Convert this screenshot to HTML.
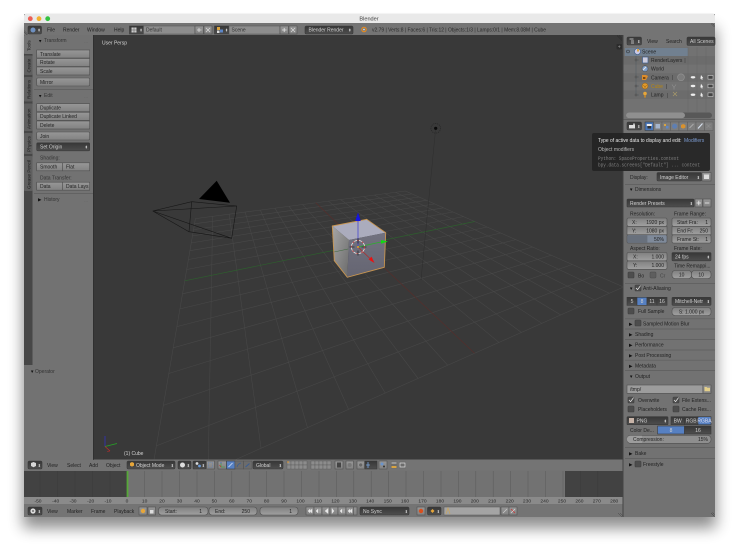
<!DOCTYPE html>
<html><head><meta charset="utf-8"><title>Blender</title>
<style>
html,body{margin:0;padding:0;background:#fff;width:739px;height:551px;overflow:hidden}
svg{display:block;filter:blur(.38px)}
text{font-family:"Liberation Sans",sans-serif;font-size:5px;fill:#222;white-space:pre}
.w{fill:#d0d0d0}.m{font-family:"Liberation Mono",monospace;fill:#808080;font-size:5px}
.e{text-anchor:end}.c{text-anchor:middle}
.ar{font-size:4.4px;fill:#111}
.u{font-size:4px;fill:#d0d0d0;text-anchor:end}
.b{fill:url(#bt);stroke:#505050;stroke-width:.6}
.d{fill:url(#dk);stroke:#3a3a3a;stroke-width:.6}
.f{fill:url(#fd);stroke:#505050;stroke-width:.6}
.a{fill:#5680c2;stroke:#3a3a3a;stroke-width:.6}
.k{fill:#4d4d4d;stroke:#404040;stroke-width:.6}
.s{stroke:#5e5e5e;stroke-width:.7}
.r text{font-size:4.9px;fill:#2a2a2a}
.h{stroke:#3c3c3c;stroke-width:.5;fill:none}
</style></head><body>
<svg width="739" height="551" viewBox="0 0 739 551" xmlns="http://www.w3.org/2000/svg">
<defs>
<linearGradient id="bt" x1="0" y1="0" x2="0" y2="1"><stop offset="0" stop-color="#979797"/><stop offset="1" stop-color="#828282"/></linearGradient>
<linearGradient id="dk" x1="0" y1="0" x2="0" y2="1"><stop offset="0" stop-color="#373737"/><stop offset="1" stop-color="#4e4e4e"/></linearGradient>
<linearGradient id="fd" x1="0" y1="0" x2="0" y2="1"><stop offset="0" stop-color="#808080"/><stop offset="1" stop-color="#a0a0a0"/></linearGradient>
<linearGradient id="lf" x1="0" y1="0" x2="1" y2="1"><stop offset="0" stop-color="#a6a6a6"/><stop offset="1" stop-color="#6a6a6a"/></linearGradient>
<linearGradient id="rf" x1="0" y1="0" x2="0" y2="1"><stop offset="0" stop-color="#72727f"/><stop offset="1" stop-color="#656572"/></linearGradient>
<filter id="sh" x="-10%" y="-10%" width="120%" height="125%"><feGaussianBlur stdDeviation="7.5"/></filter>
<clipPath id="vw"><rect x="93" y="35" width="529.5" height="424.5"/></clipPath>
</defs>

<!-- shadow + window -->
<rect x="23" y="28" width="693" height="500" fill="#000" opacity=".45" filter="url(#sh)"/>
<rect x="24" y="14" width="691" height="503" fill="#727272"/>
<path d="M24 23V16a2.5 2.5 0 0 1 2.5-2.5H712.5a2.5 2.5 0 0 1 2.5 2.5V23Z" fill="#e9e9e9"/>
<circle cx="30.3" cy="18.7" r="2.4" fill="#ec5f56"/><circle cx="39" cy="18.7" r="2.4" fill="#f3b12f"/><circle cx="47.7" cy="18.7" r="2.4" fill="#33c240"/>
<text x="369" y="20.6" class="c" style="font-size:5.6px;fill:#444">Blender</text>

<!-- top header -->
<rect x="24" y="23" width="691" height="12" fill="#747474"/>
<path d="M711 23.5l3.5 3.5M712.5 23.5l2 2M24 32l3 3M24 30.5l4 4" class="h"/>
<rect x="28" y="26" width="13.5" height="8" rx="1.5" class="d"/><circle cx="33" cy="30" r="2.5" fill="#6e90c0"/><text x="40.7" y="31.6" class="u">⬍</text>
<text x="47" y="31.6">File</text><text x="63" y="31.6">Render</text><text x="87" y="31.6">Window</text><text x="114" y="31.6">Help</text>
<rect x="129.5" y="26" width="14" height="8" class="d"/><rect x="131.5" y="27.5" width="5" height="5" fill="#ccc"/><path d="M134 27.5v5M131.5 30h5" stroke="#555" stroke-width=".5"/><text x="142.7" y="31.6" class="u">⬍</text>
<rect x="143.5" y="26" width="51.5" height="8" fill="#8d8d8d" stroke="#555" stroke-width=".5"/><text x="146" y="31.6" style="fill:#333">Default</text>
<rect x="195" y="26" width="8.5" height="8" class="b"/><path d="M197 30h4.5M199 28v4" stroke="#ddd" stroke-width=".8"/>
<rect x="204" y="26" width="8" height="8" class="b"/><path d="M206 28l4 4M210 28l-4 4" stroke="#ddd" stroke-width=".7"/>
<rect x="214.5" y="26" width="14.5" height="8" class="d"/><rect x="217" y="27" width="3" height="3" fill="#d9a441"/><rect x="220" y="29.5" width="3" height="3" fill="#5d86c6"/><rect x="217" y="30.5" width="2.5" height="2.5" fill="#ddd"/><text x="228.2" y="31.6" class="u">⬍</text>
<rect x="229" y="26" width="51" height="8" fill="#8d8d8d" stroke="#555" stroke-width=".5"/><text x="231.5" y="31.6" style="fill:#333">Scene</text>
<rect x="280" y="26" width="8.5" height="8" class="b"/><path d="M282 30h4.5M284.2 28v4" stroke="#e6e6e6" stroke-width=".8"/>
<rect x="289" y="26" width="8" height="8" class="b"/><path d="M291 28l4 4M295 28l-4 4" stroke="#ddd" stroke-width=".7"/>
<rect x="305" y="26" width="48" height="8" rx="1.5" class="d"/><text x="308.5" y="31.6" class="w">Blender Render</text><text x="351.5" y="31.6" class="u">⬍</text>
<circle cx="364" cy="29.5" r="2.2" fill="none" stroke="#e58a1f" stroke-width="1.2"/><circle cx="364" cy="29.5" r=".9" fill="#cfe0f0"/>
<text x="372" y="31.6" textLength="174" lengthAdjust="spacingAndGlyphs" style="fill:#2a2a2a">v2.79 | Verts:8 | Faces:6 | Tris:12 | Objects:1/3 | Lamps:0/1 | Mem:8.08M | Cube</text>

<!-- tool shelf -->
<rect x="24" y="35" width="69" height="425" fill="#727272"/>
<rect x="24" y="35" width="8.5" height="330" fill="#474747"/>
<rect x="24" y="35" width="9" height="19" rx="1" fill="#737373"/>
<g fill="#5f5f5f"><rect x="24" y="55.5" width="8.5" height="19.5" rx="1"/><rect x="24" y="77" width="8.5" height="24.5" rx="1"/><rect x="24" y="103.5" width="8.5" height="27.5" rx="1"/><rect x="24" y="133" width="8.5" height="21" rx="1"/><rect x="24" y="156" width="8.5" height="35" rx="1"/></g>
<g>
<text transform="translate(30.3 51) rotate(-90)" style="font-size:4.6px">Tools</text>
<text transform="translate(30.3 72.5) rotate(-90)" style="font-size:4.6px;fill:#1c1c1c">Create</text>
<text transform="translate(30.3 99) rotate(-90)" style="font-size:4.6px;fill:#1c1c1c">Relations</text>
<text transform="translate(30.3 129) rotate(-90)" style="font-size:4.6px;fill:#1c1c1c">Animation</text>
<text transform="translate(30.3 152) rotate(-90)" style="font-size:4.6px;fill:#1c1c1c">Physics</text>
<text transform="translate(30.3 189) rotate(-90)" style="font-size:4.6px;fill:#1c1c1c">Grease Pencil</text>
</g>
<text x="38" y="42.3" class="ar">▼</text><text x="44" y="42.2" style="fill:#333">Transform</text>
<rect x="36.7" y="50" width="53" height="8" class="b"/><text x="40" y="55.8">Translate</text>
<rect x="36.7" y="58.5" width="53" height="8" class="b"/><text x="40" y="64.2">Rotate</text>
<rect x="36.7" y="67" width="53" height="8" class="b"/><text x="40" y="72.8">Scale</text>
<rect x="36.7" y="78" width="53" height="8" rx="1.2" class="b"/><text x="40" y="83.8">Mirror</text>
<path d="M34 89.5h59" class="s"/>
<text x="38" y="97.3" class="ar">▼</text><text x="44" y="97.2" style="fill:#333">Edit</text>
<rect x="36.7" y="103.7" width="53" height="8" class="b"/><text x="40" y="109.6">Duplicate</text>
<rect x="36.7" y="112.3" width="53" height="8" class="b"/><text x="40" y="118.2">Duplicate Linked</text>
<rect x="36.7" y="121" width="53" height="8" class="b"/><text x="40" y="126.8">Delete</text>
<rect x="36.7" y="132" width="53" height="8" rx="1.2" class="b"/><text x="40" y="137.8">Join</text>
<rect x="36.7" y="142.8" width="53" height="8" rx="1.2" class="d"/><text x="40" y="148.6" class="w">Set Origin</text><text x="88" y="148.6" class="u">⬍</text>
<text x="40" y="159.6" style="fill:#333">Shading:</text>
<rect x="36.7" y="162.8" width="26" height="8" class="b"/><rect x="62.7" y="162.8" width="27" height="8" class="b"/><text x="40" y="168.6">Smooth</text><text x="66" y="168.6">Flat</text>
<text x="40" y="179.6" style="fill:#333">Data Transfer:</text>
<rect x="36.7" y="182.2" width="26" height="8" class="b"/><rect x="62.7" y="182.2" width="27" height="8" class="b"/><text x="40" y="188">Data</text><text x="66" y="188">Data Lays</text>
<path d="M34 193.5h59" class="s"/>
<text x="38" y="201.2" class="ar">▶</text><text x="44" y="201" style="fill:#333">History</text>
<text x="30" y="373" class="ar">▼</text><text x="35" y="372.8" style="fill:#333">Operator</text>
<text x="84" y="44" style="fill:#5c5c5c;font-size:4px">···</text><text x="84" y="99" style="fill:#5c5c5c;font-size:4px">···</text><text x="84" y="203" style="fill:#5c5c5c;font-size:4px">···</text>

<!-- 3D view -->
<rect x="93" y="35" width="529.5" height="424.5" fill="#393939"/>
<g clip-path="url(#vw)">
<g transform="translate(93 0) scale(1.0142 1) translate(-93 0)" fill="none">
<path stroke="#484848" stroke-width=".55" d="M401 191L616 287M391.2 192.3L602.1 293.2M381.1 193.7L587.3 299.9M370.6 195.1L571.4 307.1M359.8 196.5L554.1 314.9M348.6 198L535.5 323.3M337 199.5L515.3 332.4M325 201.1L493.3 342.4M299.7 204.5L442.7 365.2M286.3 206.3L413.5 378.4M272.4 208.2L381.1 393M258 210.1L345 409.4M243 212.1L304.5 427.7M227.3 214.2L258.7 448.4M211 216.3L206.5 471.9M194 218.6L146.5 499
M401 191L194 218.6M407.5 193.9L193.1 223.8M414.4 197L192.1 229.6M421.9 200.3L191.1 235.9M429.9 203.9L189.9 242.9M438.6 207.8L188.5 250.7M448 212L187.1 259.5M458.2 216.6L185.4 269.5M481.6 227L181.2 293.8M495 233L178.7 308.9M509.9 239.6L175.7 326.6M526.4 247L172.1 347.8M544.8 255.2L167.7 373.5M565.6 264.5L162.3 405.4M589.1 275L155.4 445.9M616 287L146.4 499"/>
<path stroke="#552f2c" stroke-width=".7" d="M312.6 202.8L469.2 353.3"/>
<path stroke="#2e5f2e" stroke-width=".7" d="M469.4 221.5L183.4 280.8"/>
</g>
<!-- lamp -->
<path d="M435.7 128L421 280" stroke="#2e2e2e" stroke-width=".5"/>
<circle cx="435.7" cy="128.3" r="4.8" fill="none" stroke="#222" stroke-width=".7" stroke-dasharray="1 1"/>
<circle cx="435.7" cy="128.3" r="1.6" fill="#0a0a0a"/>
<!-- camera -->
<path d="M152.7 211L191.7 201.7L236.7 206L231.7 238.3L189 231.7L191.7 201.7M152.7 211L236.7 206M152.7 211L231.7 238.3M152.7 211L189 231.7" fill="none" stroke="#161616" stroke-width=".6"/>
<path d="M216.7 180.7L199 199L230 202.7Z" fill="#000"/>
<!-- cube -->
<path d="M332.3 226L366.7 219.3L385.7 232.7L349 240Z" fill="#abacbd"/>
<path d="M332.3 226L349 240L347.3 277.3L334.3 260.7Z" fill="url(#lf)"/>
<path d="M349 240L385.7 232.7L384.3 267.3L347.3 277.3Z" fill="url(#rf)"/>
<path d="M334 252L348 249" stroke="#3f6a3f" stroke-width=".6"/>
<path d="M332.3 226L366.7 219.3L385.7 232.7L384.3 267.3L347.3 277.3L334.3 260.7Z" fill="none" stroke="#c89550" stroke-width=".9"/>
<!-- manipulators -->
<path d="M358 247V219" stroke="#3a3ad0" stroke-width=".7"/><path d="M358 212.5L355.2 221H360.8Z" fill="#1414e0"/>
<path d="M358 247L381 242" stroke="#2bb02b" stroke-width=".7"/><path d="M381 240L388 241.5L381 243.8Z" fill="#12d812"/>
<path d="M358 247L370 258.5" stroke="#b02b2b" stroke-width=".7"/><path d="M368.6 259.5L371.5 256.6L374.5 263Z" fill="#e81212"/>
<circle cx="358" cy="247" r="6.6" fill="none" stroke="#e8e8e8" stroke-width=".8"/>
<circle cx="358" cy="247" r="6.6" fill="none" stroke="#c93a3a" stroke-width=".8" stroke-dasharray="2 3"/>
<path d="M358 238.5v5M358 250.5v5M349.5 247h5M361.5 247h5" stroke="#111" stroke-width=".6"/>
<circle cx="358" cy="247" r="1" fill="#e79a2a"/>
<!-- labels -->
<text x="102" y="44.6" style="fill:#d2d2d2">User Persp</text>
<text x="124" y="454.8" style="fill:#d2d2d2">(1) Cube</text>
<path d="M105 446.5V436" stroke="#3030d0" stroke-width=".7"/><path d="M105 446.5L117 443.5" stroke="#25a525" stroke-width=".7"/><path d="M105 446.5L110 451" stroke="#c02a2a" stroke-width=".7"/>
<path d="M110 451l-3 .5" stroke="#c02a2a" stroke-width=".5"/>
<path d="M617 35.5l5 5M619 35.5l3 3" stroke="#222" stroke-width=".5"/>
</g>
<rect x="93" y="35" width=".6" height="425" fill="#2c2c2c"/>
<rect x="622.5" y="35" width="1" height="482" fill="#444"/>
<!-- tiny plus -->
<rect x="616.5" y="44" width="5.5" height="5.5" rx="1" fill="#2c2c2c"/><text x="619.2" y="48.5" class="c" style="fill:#999;font-size:5px">+</text>

<!-- 3D header -->
<rect x="24" y="460" width="598.5" height="10.5" fill="#747474"/>
<rect x="28" y="461" width="14" height="8" rx="1.5" class="d"/><path d="M31 463l2.5-1 2.5 1v3l-2.5 1.2-2.5-1.2Z" fill="#d8d8d8"/><text x="41" y="467" class="u">⬍</text>
<g><text x="47" y="467">View</text><text x="67" y="467">Select</text><text x="89" y="467">Add</text><text x="106" y="467">Object</text></g>
<rect x="127" y="461" width="48" height="8" rx="1.5" class="d"/><path d="M130 463l2-1 2 1v2.6l-2 1-2-1Z" fill="#e6a63a"/><text x="136" y="467" class="w">Object Mode</text><text x="174" y="467" class="u">⬍</text>
<rect x="178" y="461" width="13" height="8" rx="1.5" class="d"/><circle cx="182.5" cy="465" r="2.5" fill="#ddd"/><text x="190" y="467" class="u">⬍</text>
<rect x="193" y="461" width="13" height="8" rx="1" class="d"/><circle cx="197" cy="463.5" r="1.4" fill="#ddd"/><circle cx="199.5" cy="466" r="1.4" fill="#6a9ad8"/><text x="205" y="467" class="u">⬍</text>
<rect x="206.5" y="461" width="8" height="8" class="b"/><rect x="208.5" y="462.5" width="4" height="5" fill="none" stroke="#5f7fb0" stroke-width=".6" stroke-dasharray="1 .6"/>
<rect x="218" y="461" width="8.5" height="8" class="b"/><path d="M221 463v4h4" fill="none" stroke="#33a033" stroke-width=".6"/><path d="M221 467l-1.5-2" stroke="#c22" stroke-width=".6"/><path d="M221 463.5v-1.5" stroke="#25c" stroke-width=".6"/>
<rect x="226.5" y="461" width="8.5" height="8" class="a"/><path d="M228.5 467l4-4" stroke="#d9e3f5" stroke-width=".8"/>
<rect x="235" y="461" width="8.5" height="8" fill="#6c6c6c" stroke="#505050" stroke-width=".5"/><path d="M237 467c.5-2 2-3.5 4-4" fill="none" stroke="#3a5d92" stroke-width=".8"/>
<rect x="243.5" y="461" width="8.5" height="8" fill="#6c6c6c" stroke="#505050" stroke-width=".5"/><path d="M245.5 467l4-3.5" stroke="#3a5d92" stroke-width="1"/>
<rect x="253" y="461" width="30" height="8" rx="1.5" class="d"/><text x="256" y="467" class="w">Global</text><text x="282" y="467" class="u">⬍</text>
<g fill="#8c8c8c" stroke="#5a5a5a" stroke-width=".4">
<rect x="287" y="461" width="4" height="4"/><rect x="291" y="461" width="4" height="4"/><rect x="295" y="461" width="4" height="4"/><rect x="299" y="461" width="4" height="4"/><rect x="303" y="461" width="4" height="4"/>
<rect x="287" y="465" width="4" height="4"/><rect x="291" y="465" width="4" height="4"/><rect x="295" y="465" width="4" height="4"/><rect x="299" y="465" width="4" height="4"/><rect x="303" y="465" width="4" height="4"/>
<rect x="311" y="461" width="4" height="4"/><rect x="315" y="461" width="4" height="4"/><rect x="319" y="461" width="4" height="4"/><rect x="323" y="461" width="4" height="4"/><rect x="327" y="461" width="4" height="4"/>
<rect x="311" y="465" width="4" height="4"/><rect x="315" y="465" width="4" height="4"/><rect x="319" y="465" width="4" height="4"/><rect x="323" y="465" width="4" height="4"/><rect x="327" y="465" width="4" height="4"/>
</g>
<circle cx="288" cy="462" r=".8" fill="#e89a2a"/>
<rect x="335" y="461" width="8" height="8" class="b"/><rect x="337" y="462.5" width="4" height="5" fill="#444"/>
<rect x="346" y="461" width="7.5" height="8" class="b"/><circle cx="349.7" cy="465" r="2" fill="#777"/>
<rect x="357" y="461" width="7.5" height="8" class="b"/><circle cx="360.7" cy="465" r="2" fill="#666" stroke="#aaa" stroke-width=".4"/>
<rect x="365" y="461" width="12" height="8" class="d"/><path d="M368 462v6M366 465h4" stroke="#7ba7e0" stroke-width=".8"/>
<rect x="379" y="461" width="8" height="8" class="b"/><circle cx="382" cy="464" r="1.5" fill="#6a94cc"/><circle cx="384" cy="466.5" r="1" fill="#333"/>
<rect x="391" y="461.5" width="6.5" height="7" fill="#6c6c6c"/><path d="M391.5 466h5v2h-5Z" fill="#d9a441"/><path d="M391.5 463h5" stroke="#ddd" stroke-width=".8"/>
<rect x="399" y="461.5" width="7" height="7" fill="#6c6c6c"/><path d="M400 463h5v4h-5Z" fill="none" stroke="#ddd" stroke-width=".7"/>

<!-- timeline -->
<rect x="24" y="471" width="598.5" height="26" fill="#424242"/>
<rect x="127" y="471" width="438" height="26" fill="#727272"/>
<g stroke="#2f2f2f" stroke-opacity=".35" stroke-width=".5">
<path d="M40 471v26M57.5 471v26M75 471v26M92.5 471v26M110 471v26M144.6 471v26M162 471v26M179.5 471v26M197 471v26M214.3 471v26M231.8 471v26M249.2 471v26M266.6 471v26M284 471v26M301.5 471v26M319 471v26M336.4 471v26M353.8 471v26M371.2 471v26M388.7 471v26M406 471v26M423.5 471v26M441 471v26M458.4 471v26M475.8 471v26M493.2 471v26M510.7 471v26M528 471v26M545.5 471v26M563 471v26M580.4 471v26M597.8 471v26"/>
</g>
<rect x="126.6" y="471" width="1.8" height="26" fill="#57a83a"/>
<rect x="24" y="497" width="598.5" height="7" fill="#8a8a8a"/>
<g class="r">
<text x="38" y="502.6" class="c">-50</text><text x="55.7" y="502.6" class="c">-40</text><text x="73" y="502.6" class="c">-30</text><text x="90.7" y="502.6" class="c">-20</text><text x="108" y="502.6" class="c">-10</text><text x="127" y="502.6" class="c">0</text><text x="144.6" y="502.6" class="c">10</text><text x="162" y="502.6" class="c">20</text><text x="179.5" y="502.6" class="c">30</text><text x="197" y="502.6" class="c">40</text><text x="214.3" y="502.6" class="c">50</text><text x="231.8" y="502.6" class="c">60</text><text x="249.2" y="502.6" class="c">70</text><text x="266.6" y="502.6" class="c">80</text><text x="284" y="502.6" class="c">90</text><text x="300.5" y="502.6" class="c">100</text><text x="318" y="502.6" class="c">110</text><text x="335.4" y="502.6" class="c">120</text><text x="352.8" y="502.6" class="c">130</text><text x="370.2" y="502.6" class="c">140</text><text x="387.7" y="502.6" class="c">150</text><text x="405" y="502.6" class="c">160</text><text x="422.5" y="502.6" class="c">170</text><text x="440" y="502.6" class="c">180</text><text x="457.4" y="502.6" class="c">190</text><text x="474.8" y="502.6" class="c">200</text><text x="492.2" y="502.6" class="c">210</text><text x="509.7" y="502.6" class="c">220</text><text x="527" y="502.6" class="c">230</text><text x="544.5" y="502.6" class="c">240</text><text x="562" y="502.6" class="c">250</text><text x="579.4" y="502.6" class="c">260</text><text x="596.8" y="502.6" class="c">270</text><text x="614.2" y="502.6" class="c">280</text>
</g>

<!-- bottom header -->
<rect x="24" y="504" width="598.5" height="13" fill="#747474"/>
<rect x="28" y="507" width="14" height="8" rx="1.5" class="d"/><circle cx="33" cy="511" r="2.6" fill="#ddd"/><circle cx="33" cy="511" r=".9" fill="#555"/><text x="41" y="513" class="u">⬍</text>
<g><text x="47" y="513">View</text><text x="67" y="513">Marker</text><text x="91" y="513">Frame</text><text x="114" y="513">Playback</text></g>
<rect x="139" y="507" width="8" height="8" class="b"/><circle cx="143" cy="511" r="2.2" fill="#e6a63a"/>
<rect x="148" y="507" width="7.5" height="8" class="b"/><rect x="150" y="510" width="3.5" height="3.5" fill="#ddd"/>
<rect x="158.5" y="507" width="49.5" height="8" rx="3" class="f"/><text x="165" y="513">Start:</text><text x="202" y="513" class="e">1</text>
<rect x="209" y="507" width="48" height="8" rx="3" class="f"/><text x="215" y="513">End:</text><text x="250" y="513" class="e">250</text>
<rect x="260" y="507" width="38" height="8" rx="3" class="f"/><text x="292" y="513" class="e">1</text>
<g>
<rect x="306" y="507" width="8" height="8" class="b"/><rect x="314" y="507" width="8" height="8" class="b"/><rect x="322" y="507" width="8" height="8" class="b"/><rect x="330" y="507" width="8" height="8" class="b"/><rect x="338" y="507" width="8" height="8" class="b"/><rect x="346" y="507" width="8" height="8" class="b"/><rect x="353.5" y="507" width="3.5" height="8" class="b"/>
<path d="M308 511l2-2v4ZM310 511l2-2v4ZM316 511l2-2v4ZM320 509v4M325 511l3-2.5v5ZM334 511l-2-2.5v5ZM340 511l2-2v4ZM344 509v4M348 511l2-2v4ZM350 511l2-2v4Z" fill="#e8e8e8" stroke="#e8e8e8" stroke-width=".4"/>
</g>
<rect x="360" y="507" width="49" height="8" rx="1.5" class="d"/><text x="363" y="513" class="w">No Sync</text><text x="408" y="513" class="u">⬍</text>
<rect x="417" y="507" width="8" height="8" class="b"/><circle cx="421" cy="511" r="2.2" fill="#d9501e"/>
<rect x="427.5" y="507" width="13.5" height="8" rx="1.5" class="d"/><path d="M432.5 509l2 2-2 2-2-2Z" fill="#e6a63a"/><text x="440" y="513" class="u">⬍</text>
<rect x="444" y="507" width="56" height="8" fill="#a4a4a4" stroke="#555" stroke-width=".5"/><path d="M446 514l2-6 2 6" fill="none" stroke="#c8a560" stroke-width=".8"/>
<rect x="501" y="507" width="8" height="8" class="b"/><path d="M503 513l4-4" stroke="#ccc" stroke-width=".7"/>
<rect x="509" y="507" width="8" height="8" class="b"/><path d="M511 509l4 4" stroke="#c33" stroke-width=".8"/><path d="M511 513l4-4" stroke="#ddd" stroke-width=".6"/>
<path d="M618 513l4 4M620 513l2.5 2.5" stroke="#444" stroke-width=".5"/>

<!-- outliner -->
<rect x="623.5" y="35" width="91.5" height="12" fill="#747474"/>
<rect x="627" y="37" width="14.5" height="8" rx="1.5" class="d"/><path d="M629.5 39h4M631 41h3M631 43h3" stroke="#ddd" stroke-width=".7"/><text x="640.5" y="43" class="u">⬍</text>
<text x="647" y="43">View</text><text x="666" y="43">Search</text>
<rect x="687" y="37" width="28" height="8.5" rx="1.5" class="d"/><text x="690" y="43" class="w">All Scenes</text>
<rect x="623.5" y="47" width="91.5" height="65" fill="#727272"/>
<g fill="#6c6c6c"><rect x="623.5" y="56" width="91.5" height="8.6"/><rect x="623.5" y="73.2" width="91.5" height="8.6"/><rect x="623.5" y="90.4" width="91.5" height="8.6"/></g>
<rect x="625" y="48" width="63" height="8" fill="#718090"/>
<path d="M688 47v65M697 47v65M706 47v65" stroke="#666" stroke-width=".5"/>
<path d="M636 56v40M636 60h3M636 77h3M636 86h3M636 95h3" stroke="#4f5860" stroke-width=".5" fill="none"/>
<circle cx="628" cy="51.5" r="1.5" fill="none" stroke="#222" stroke-width=".5"/>
<circle cx="636" cy="60" r="1" fill="#888" stroke="#222" stroke-width=".4"/><circle cx="636" cy="77" r="1" fill="#888" stroke="#222" stroke-width=".4"/><circle cx="636" cy="86" r="1" fill="#888" stroke="#222" stroke-width=".4"/><circle cx="636" cy="95" r="1" fill="#888" stroke="#222" stroke-width=".4"/>
<!-- outliner icons -->
<circle cx="637.5" cy="51.5" r="3" fill="#c9c9e6" stroke="#3f5f90" stroke-width=".6"/><rect x="637" y="49" width="2" height="2.5" fill="#d9a441"/>
<rect x="642.5" y="57" width="5.5" height="6" fill="#ccd" stroke="#3f5f90" stroke-width=".7"/>
<circle cx="645" cy="68.7" r="3" fill="#7f9fca" stroke="#444" stroke-width=".5"/><path d="M643 70l3-3" stroke="#e8e8e8" stroke-width=".9"/>
<path d="M642 75h4l2 1-2 4h-4Z" fill="#dc8c2c"/><rect x="643" y="77" width="2.4" height="2" fill="#7b4a12"/>
<circle cx="645" cy="86" r="3" fill="#e09a2e" stroke="#8a5a14" stroke-width=".5"/><path d="M643.5 85l1.5 2.5 1.5-2.5" stroke="#8a5a14" stroke-width=".5" fill="none"/>
<circle cx="645" cy="93.5" r="1.8" fill="#e6a63a"/><rect x="644.2" y="95" width="1.6" height="2.6" fill="#c88a2a"/>
<g style="fill:#111">
<text x="642" y="53.6">Scene</text><text x="651" y="62">RenderLayers</text><text x="651" y="70.7">World</text><text x="651" y="79.3">Camera</text><text x="651" y="88" style="fill:#b9860d">Cube</text><text x="651" y="96.7">Lamp</text>
</g>
<path d="M685 58v5M672.5 75v5M666.5 84v5M667.5 93v5" stroke="#444" stroke-width=".6"/>
<circle cx="681" cy="77.3" r="3.4" fill="#7c7c7c" stroke="#909090" stroke-width=".7"/>
<path d="M672 84.5l2 3 2-3M674 87.5v2" fill="none" stroke="#999" stroke-width=".5"/>
<path d="M673 92l4 4M677 92l-4 4" stroke="#a89a6a" stroke-width=".7"/>
<g fill="#eee"><ellipse cx="693" cy="77.3" rx="2.3" ry="1.2"/><ellipse cx="693" cy="86" rx="2.3" ry="1.2"/><ellipse cx="693" cy="94.7" rx="2.3" ry="1.2"/>
<path d="M701 75l2.2 3-1 .1.5 1.4-1 .3-.6-1.4-.8.7Z"/><path d="M701 83.7l2.2 3-1 .1.5 1.4-1 .3-.6-1.4-.8.7Z"/><path d="M701 92.4l2.2 3-1 .1.5 1.4-1 .3-.6-1.4-.8.7Z"/></g>
<g fill="#444" stroke="#ddd" stroke-width=".5"><rect x="708" y="75.5" width="5" height="3.6"/><rect x="708" y="84.2" width="5" height="3.6"/><rect x="708" y="92.9" width="5" height="3.6"/></g>
<!-- scrollbar -->
<rect x="626" y="112.5" width="86" height="5.6" rx="2.8" fill="#585858"/>
<rect x="626" y="112.5" width="59" height="5.6" rx="2.8" fill="#8f8f8f"/>
<rect x="623.5" y="119" width="91.5" height=".7" fill="#555"/>

<!-- properties header -->
<rect x="623.5" y="120" width="91.5" height="12" fill="#747474"/>
<rect x="627" y="122" width="14.5" height="8" rx="1.5" class="d"/><rect x="629" y="125" width="6" height="3.4" fill="#ddd"/><rect x="633" y="123.5" width="2" height="1.5" fill="#bbb"/><text x="640.5" y="128" class="u">⬍</text>
<rect x="645" y="122" width="8.5" height="8.5" fill="#4a77b8" stroke="#333" stroke-width=".5"/><rect x="646.8" y="124" width="5" height="2" fill="#eee"/><rect x="647.5" y="126" width="3.5" height="2.5" fill="#333"/>
<rect x="653.5" y="122" width="8.5" height="8.5" fill="#7d7d7d" stroke="#555" stroke-width=".4"/><rect x="655.5" y="124" width="4.5" height="4.5" fill="#a5b5cc"/>
<rect x="662" y="122" width="8.5" height="8.5" fill="#7d7d7d" stroke="#555" stroke-width=".4"/><rect x="664" y="124" width="2" height="2" fill="#d9a441"/><rect x="666" y="126" width="2.5" height="2.5" fill="#5d86c6"/>
<rect x="670.5" y="122" width="8.5" height="8.5" fill="#7d7d7d" stroke="#555" stroke-width=".4"/><circle cx="674.7" cy="126.2" r="2.6" fill="#5f7fb2"/>
<rect x="679" y="122" width="8.5" height="8.5" fill="#7d7d7d" stroke="#555" stroke-width=".4"/><path d="M681 125l2.2-1 2.2 1v2.6l-2.2 1-2.2-1Z" fill="#d9922e"/>
<rect x="687.5" y="122" width="8.5" height="8.5" fill="#7d7d7d" stroke="#555" stroke-width=".4"/><path d="M689.5 128l4-4" stroke="#aaa" stroke-width="1"/>
<rect x="696" y="122" width="8.5" height="8.5" fill="#7d7d7d" stroke="#555" stroke-width=".4"/><path d="M698 128.5l4.5-5" stroke="#d8e2f0" stroke-width="1.1"/>
<rect x="704.5" y="122" width="8.5" height="8.5" fill="#7d7d7d" stroke="#555" stroke-width=".4"/><path d="M706.5 124l4 4M710.5 124l-4 4" stroke="#999" stroke-width=".5"/>

<!-- properties -->
<text x="630" y="178.8">Display:</text>
<rect x="657" y="172.5" width="44.5" height="8.5" rx="1.2" class="d"/><text x="660" y="178.8" class="w">Image Editor</text><text x="700" y="178.8" class="u">⬍</text>
<rect x="702" y="172.5" width="9" height="8.5" class="b"/><rect x="704" y="174.5" width="5" height="4.5" fill="#ddd"/>
<path d="M625 184.5h90" class="s"/>
<text x="629" y="191" class="ar">▼</text><text x="635" y="191">Dimensions</text>
<rect x="627" y="199" width="67" height="8" rx="1" class="d"/><text x="630" y="205" class="w">Render Presets</text><text x="693" y="205" class="u">⬍</text>
<rect x="695" y="199" width="7.5" height="8" class="b"/><path d="M696.5 203h4.5M698.8 200.8v4.4" stroke="#eee" stroke-width=".8"/>
<rect x="703" y="199" width="8" height="8" class="b"/><path d="M704.8 203h4.5" stroke="#eee" stroke-width=".8"/>
<text x="630" y="215.6">Resolution:</text><text x="674" y="215.6">Frame Range:</text>
<rect x="627" y="218" width="40" height="8.3" rx="1.5" class="f"/><text x="632" y="224">X:</text><text x="664" y="224" class="e">1920 px</text>
<rect x="627" y="226.4" width="40" height="8.3" class="f"/><text x="632" y="232.4">Y:</text><text x="664" y="232.4" class="e">1080 px</text>
<rect x="627" y="234.8" width="40" height="8.3" rx="1.5" fill="#7f8a9a" stroke="#505050" stroke-width=".6"/><rect x="627.4" y="235.2" width="20" height="7.6" fill="#68707c"/><text x="664" y="240.8" class="e">50%</text>
<rect x="672" y="218" width="39" height="8.3" rx="1.5" class="f"/><text x="677" y="224">Start Fra:</text><text x="708" y="224" class="e">1</text>
<rect x="672" y="226.4" width="39" height="8.3" class="f"/><text x="677" y="232.4">End Fr:</text><text x="708" y="232.4" class="e">250</text>
<rect x="672" y="234.8" width="39" height="8.3" rx="1.5" class="f"/><text x="677" y="240.8">Frame St:</text><text x="708" y="240.8" class="e">1</text>
<text x="630" y="250">Aspect Ratio:</text><text x="674" y="250">Frame Rate:</text>
<rect x="627" y="252.5" width="40" height="8.3" rx="1.5" class="f"/><text x="633" y="258.4">X:</text><text x="664" y="258.4" class="e">1.000</text>
<rect x="627" y="261" width="40" height="8.3" rx="1.5" class="f"/><text x="633" y="267">Y:</text><text x="664" y="267" class="e">1.000</text>
<rect x="672" y="252.5" width="39" height="8.3" rx="1" class="d"/><text x="675" y="258.4" class="w">24 fps</text><text x="710" y="258.4" class="u">⬍</text>
<text x="674" y="267.6">Time Remappi...</text>
<rect x="672" y="270.5" width="19.5" height="8" rx="3" class="f"/><rect x="691.5" y="270.5" width="19.5" height="8" rx="3" class="f"/><text x="681.7" y="276.3" class="c">10</text><text x="701.2" y="276.3" class="c">10</text>
<rect x="628" y="272" width="6" height="6" rx="1" class="k"/><text x="638" y="277.4">Bo</text>
<rect x="650" y="272" width="6" height="6" rx="1" fill="#5e5e5e" stroke="#4a4a4a" stroke-width=".5"/><text x="660" y="277.4" style="fill:#444">Cr</text>
<path d="M625 283.5h90" class="s"/>
<text x="629" y="290.2" class="ar">▼</text>
<rect x="635" y="285" width="6" height="6" rx="1" class="k"/><path d="M636 288l1.6 1.6 3-4" fill="none" stroke="#eee" stroke-width=".7"/>
<text x="643" y="290.2">Anti-Aliasing</text>
<rect x="627" y="297.3" width="10" height="8" class="d"/><rect x="637" y="297.3" width="10" height="8" class="a"/><rect x="647" y="297.3" width="10" height="8" class="d"/><rect x="657" y="297.3" width="10" height="8" class="d"/>
<text x="632" y="303.2" class="c w">5</text><text x="642" y="303.2" class="c w">8</text><text x="652" y="303.2" class="c w">11</text><text x="662" y="303.2" class="c w">16</text>
<rect x="672" y="297.3" width="39" height="8" rx="1" class="d"/><text x="675" y="303.2" class="w">Mitchell-Netr</text><text x="710" y="303.2" class="u">⬍</text>
<rect x="628" y="308" width="6" height="6" rx="1" class="k"/><text x="638" y="312.8">Full Sample</text>
<rect x="672" y="307.5" width="39" height="8" rx="3" class="f"/><text x="691.5" y="313.3" class="c">S: 1.000 px</text>
<path d="M625 318.8h90" class="s"/>
<text x="629" y="325.5" class="ar">▶</text><rect x="635" y="320" width="6" height="6" rx="1" class="k"/><text x="643" y="325.4">Sampled Motion Blur</text>
<path d="M625 329h90" class="s"/>
<text x="629" y="336" class="ar">▶</text><text x="635" y="336">Shading</text>
<path d="M625 339.5h90" class="s"/>
<text x="629" y="346.6" class="ar">▶</text><text x="635" y="346.6">Performance</text>
<path d="M625 350h90" class="s"/>
<text x="629" y="357" class="ar">▶</text><text x="635" y="357">Post Processing</text>
<path d="M625 360.2h90" class="s"/>
<text x="629" y="367.4" class="ar">▶</text><text x="635" y="367.4">Metadata</text>
<path d="M625 370.5h90" class="s"/>
<text x="629" y="377.8" class="ar">▼</text><text x="635" y="377.8">Output</text>
<rect x="627" y="385" width="76" height="8.3" fill="#9c9c9c" stroke="#505050" stroke-width=".6"/><text x="630" y="391">/tmp/</text>
<rect x="703" y="385" width="8" height="8.3" class="b"/><path d="M704.5 387h2l.8.8h2.7v3.5h-5.5Z" fill="#e3cf8a"/>
<rect x="628" y="397" width="6" height="6" rx="1" class="k"/><path d="M629 400l1.6 1.6 3-4" fill="none" stroke="#eee" stroke-width=".7"/><text x="638" y="402">Overwrite</text>
<rect x="673" y="397" width="6" height="6" rx="1" class="k"/><path d="M674 400l1.6 1.6 3-4" fill="none" stroke="#eee" stroke-width=".7"/><text x="682" y="402">File Extens...</text>
<rect x="628" y="406" width="6" height="6" rx="1" class="k"/><text x="638" y="411">Placeholders</text>
<rect x="673" y="406" width="6" height="6" rx="1" class="k"/><text x="682" y="411">Cache Res...</text>
<rect x="627" y="416.7" width="41" height="8" rx="1" class="d"/><rect x="629" y="418" width="5" height="5" fill="#c8b4a8"/><text x="636.5" y="422.7" class="w">PNG</text><text x="667" y="422.7" class="u">⬍</text>
<rect x="671" y="416.7" width="13.5" height="8" class="d"/><rect x="684.5" y="416.7" width="13.5" height="8" class="d"/><rect x="698" y="416.7" width="13" height="8" class="a"/>
<text x="677.7" y="422.7" class="c w">BW</text><text x="691.2" y="422.7" class="c w">RGB</text><text x="704.5" y="422.7" class="c" style="fill:#dde">RGBA</text>
<text x="630" y="432">Color De...</text>
<rect x="657.5" y="426" width="27" height="8" class="a"/><rect x="684.5" y="426" width="26.5" height="8" class="d"/>
<text x="671" y="432" class="c w">8</text><text x="698" y="432" class="c w">16</text>
<rect x="627" y="435.3" width="84" height="8" rx="3.5" fill="#8e8e8e" stroke="#505050" stroke-width=".6"/>
<path d="M630.5 435.6H642V443H630.5a3.5 3.5 0 0 1 0-7.4Z" fill="#9d9d9d"/>
<text x="633" y="441.2">Compression:</text><text x="708" y="441.2" class="e">15%</text>
<path d="M625 447.5h90" class="s"/>
<text x="629" y="455" class="ar">▶</text><text x="635" y="455">Bake</text>
<path d="M625 458.5h90" class="s"/>
<text x="629" y="466" class="ar">▶</text><rect x="635" y="461" width="6" height="6" rx="1" class="k"/><text x="643" y="466">Freestyle</text>
<path d="M711 513l3.5 3.5M712.5 512.5l2 2" class="h"/>

<!-- tooltip -->
<rect x="592" y="133" width="118" height="38" rx="2" fill="#232323" fill-opacity=".93"/>
<text x="598" y="142" style="fill:#e8e8e8;font-size:5px" textLength="83.5" lengthAdjust="spacingAndGlyphs">Type of active data to display and edit:</text>
<text x="684" y="142" style="fill:#7c9bd0;font-size:5px">Modifiers</text>
<text x="598" y="150.9" style="fill:#b8b8b8">Object modifiers</text>
<text x="598" y="159.8" class="m" textLength="81" lengthAdjust="spacingAndGlyphs">Python: SpaceProperties.context</text>
<text x="598" y="166.4" class="m" textLength="102" lengthAdjust="spacingAndGlyphs">bpy.data.screens["Default"] ... context</text>
</svg>
</body></html>
